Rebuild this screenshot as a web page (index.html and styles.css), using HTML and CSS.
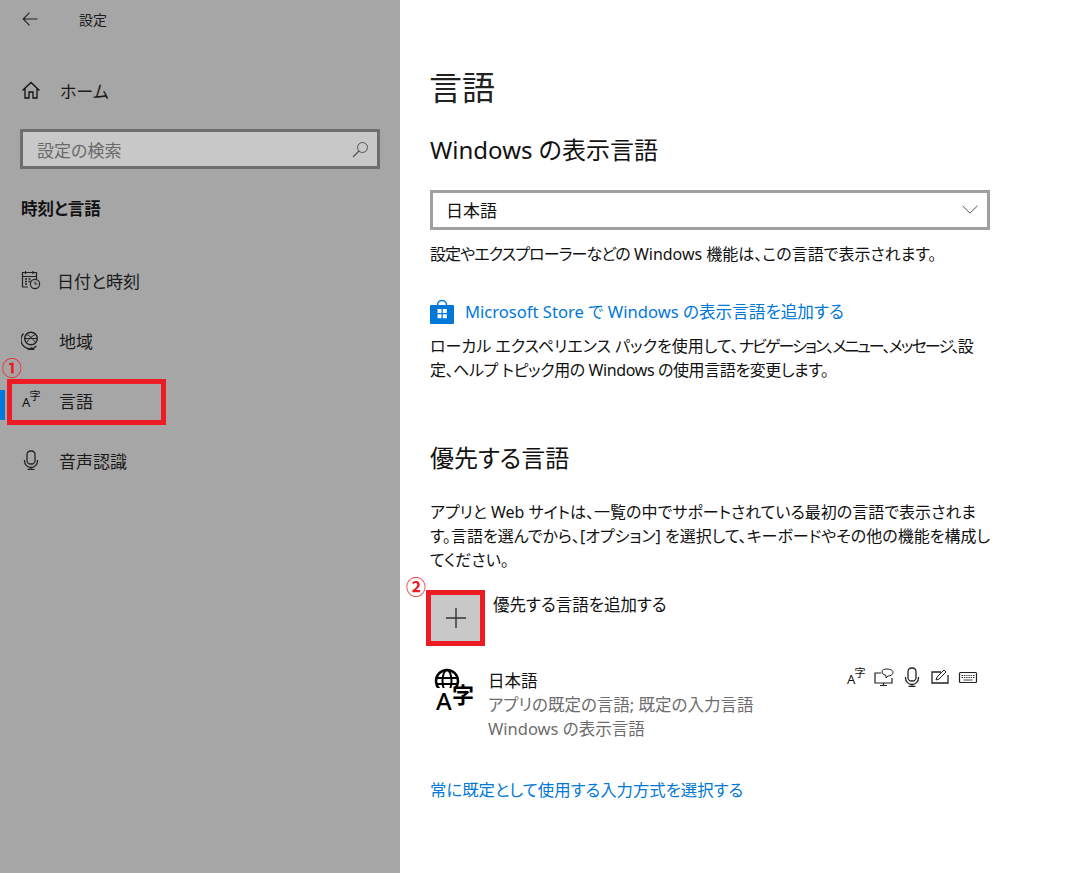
FILE: index.html
```html
<!DOCTYPE html>
<html lang="ja">
<head>
<meta charset="utf-8">
<title>設定</title>
<link rel="stylesheet" href="styles.css">
</head>
<body>
<div class="app">
  <aside class="side">
    <div class="titlebar">
      <svg class="back" width="16" height="14" viewBox="0 0 16 14"><path d="M7.5 .7 1.2 7l6.3 6.3M1.2 7H15.5" fill="none" stroke="#222" stroke-width="1.1"/></svg>
      <span class="apptitle">設定</span>
    </div>
    <div class="nav home">
      <svg class="ico" width="20" height="20" viewBox="0 0 20 20"><path d="M1.5 10.5 10 2.5l8.5 8M4 8.5V18h4v-6h4v6h4V8.5" fill="none" stroke="#111" stroke-width="1.3"/></svg>
      <span>ホーム</span>
    </div>
    <div class="search">
      <span class="ph">設定の検索</span>
      <svg width="17" height="17" viewBox="0 0 17 17"><circle cx="10.5" cy="6.5" r="5" fill="none" stroke="#555" stroke-width="1"/><path d="M7 10 1 16" stroke="#555" stroke-width="1.2"/></svg>
    </div>
    <div class="group">時刻と言語</div>
    <div class="nav first">
      <svg class="ico" width="20" height="20" viewBox="0 0 20 20"><path d="M7 17H1.5V2.5h14V9M1.5 6.5h14M4.5 1v3M12 1v3" fill="none" stroke="#222" stroke-width="1.2"/><path d="M4 9h2M7.5 9h2M4 11.5h2M7.5 11.5h2M4 14h2" stroke="#222" stroke-width="1.4"/><circle cx="14" cy="14" r="4.6" fill="none" stroke="#222" stroke-width="1.2"/><path d="M14 11.5V14h2.4" fill="none" stroke="#222"/></svg>
      <span>日付と時刻</span>
    </div>
    <div class="nav">
      <svg class="ico" width="20" height="20" viewBox="0 0 20 20"><circle cx="10" cy="8.5" r="6.3" fill="none" stroke="#222" stroke-width="1.4"/><path d="M5.5 4.500c3 1 6 4 9 8M14.500 4.500c-3 1-6 4-9 8M4 8.500h12" fill="none" stroke="#222"/><path d="M2.500 3.500a9 9 0 0 0 13 12.500M10 17v2M6.500 19.300h7" fill="none" stroke="#222" stroke-width="1.200"/></svg>
      <span>地域</span>
    </div>
    <div class="nav active">
      <svg class="ico glyphs" width="20" height="20" viewBox="0 0 20 20"><text class="ico-a" x="1" y="17">A</text><text class="ico-z" x="8.500" y="10">字</text></svg>
      <span>言語</span>
    </div>
    <div class="nav">
      <svg class="ico" width="20" height="20" viewBox="0 0 20 20"><rect x="6" y="1" width="8" height="13" rx="3.500" fill="none" stroke="#222" stroke-width="1.300"/><path d="M3.500 10v1a6 6 0 0 0 13 0v-1M10 17v2.500M6.500 19.500h7" fill="none" stroke="#222" stroke-width="1.300"/></svg>
      <span>音声認識</span>
    </div>
  </aside>
  <main class="main">
    <h1 class="h1">言語</h1>
    <h2 class="h2">Windows の表示言語</h2>
    <div class="select"><span>日本語</span>
      <svg width="16" height="9" viewBox="0 0 16 9"><path d="M.5 .8 8 8.200 15.500 .8" fill="none" stroke="#555"/></svg>
    </div>
    <p class="p one"><span class="snug">設定やエクスプローラーなどの</span> Windows 機能は、この言語で表示されます。</p>
    <div class="store">
      <svg width="24" height="24" viewBox="0 0 24 24"><path d="M7.500 6V5a4.500 4.500 0 0 1 9 0v1" fill="none" stroke="#0078d7" stroke-width="1.500"/><rect x="0" y="5" width="24" height="19" rx="1" fill="#0078d7"/><path d="M7.500 9h4v4h-4zM12.800 9h4v4h-4zM7.500 14.300h4v4h-4zM12.800 14.300h4v4h-4z" fill="#fff"/></svg>
      <a class="link">Microsoft Store で Windows の表示言語を追加する</a>
    </div>
    <p class="p two">ローカル エクスペリエンス パックを使用して、<span class="tight">ナビゲーション、メニュー、メッセージ、</span>設<br><span class="slight">定、ヘルプ トピック用の Windows の使用言語を変更します。</span></p>
    <h2 class="h2 second">優先する言語</h2>
    <p class="p three">アプリと Web サイトは、一覧の中でサポートされている最初の言語で表示されます。言語を選んでから、[オプション] を選択して、キーボードやその他の機能を構成してください。</p>
    <div class="add">
      <div class="plus"><svg width="22" height="22" viewBox="0 0 22 22"><path d="M11 1v20M1 11h20" stroke="#333" stroke-width="1.400"/></svg></div>
      <span class="addtext">優先する言語を追加する</span>
    </div>
    <div class="lang">
      <svg class="langico" width="42" height="44" viewBox="0 0 42 44"><circle cx="13" cy="11" r="11" fill="none" stroke="#000" stroke-width="2.500"/><ellipse cx="13" cy="11" rx="4.500" ry="11" fill="none" stroke="#000" stroke-width="2"/><path d="M2 8h22M2 14h22" stroke="#000" stroke-width="2"/><rect x="0" y="18" width="42" height="26" fill="#fff"/><text class="big-a" x="2" y="40">A</text><text class="big-z" x="18" y="33">字</text></svg>
      <div class="langinfo">
        <div class="langname">日本語</div>
        <div class="sub">アプリの既定の言語; 既定の入力言語</div>
        <div class="sub">Windows の表示言語</div>
      </div>
      <div class="feats">
        <svg class="glyphs" width="20" height="20" viewBox="0 0 20 20"><text class="ico-a" x="1" y="17">A</text><text class="ico-z" x="8.500" y="10">字</text></svg>
        <svg width="20" height="20" viewBox="0 0 20 20"><path d="M7 6H1v10h17v-5M6 18.500h7M9.500 16v2.500" fill="none" stroke="#222" stroke-width="1.200"/><path d="M13 2c3 0 6 1 6 3.500S16 9 14 9l-2 2v-2.500C9 7.500 8 6.500 8 5c0-2 2-3 5-3z" fill="#fff" stroke="#222"/></svg>
        <svg width="20" height="20" viewBox="0 0 20 20"><rect x="6" y="1" width="8" height="13" rx="3.500" fill="none" stroke="#222" stroke-width="1.300"/><path d="M3.500 10v1a6 6 0 0 0 13 0v-1M10 17v2.500M6.500 19.500h7" fill="none" stroke="#222" stroke-width="1.300"/></svg>
        <svg width="20" height="20" viewBox="0 0 20 20"><path d="M11 5H2v11h16V8" fill="none" stroke="#222" stroke-width="1.300"/><path d="M6 13l1-3 7-7 2 2-7 7z" fill="#fff" stroke="#222"/></svg>
        <svg width="20" height="20" viewBox="0 0 20 20"><rect x="1.500" y="5.500" width="17" height="10" rx="1" fill="none" stroke="#222" stroke-width="1.200"/><path d="M3.500 8.500h13M3.500 10.500h13" stroke="#444" stroke-dasharray="1.500 .8"/><path d="M5.500 13h9" stroke="#444"/></svg>
      </div>
    </div>
    <a class="link choose">常に既定として使用する入力方式を選択する</a>
  </main>
</div>
<div class="mark box1"></div>
<div class="mark box2"></div>
<span class="num n1">①</span>
<span class="num n2">②</span>
</body>
</html>
```
FILE: styles.css
```css
* { box-sizing: border-box; }
html, body { margin: 0; padding: 0; height: 100%; background: #fff; overflow: hidden; }
body { font-family: "Noto Sans", "Noto Sans CJK JP", sans-serif; font-size: 16.5px; color: #111; position: relative; font-feature-settings: "palt"; }
.app { display: flex; height: 873px; }

.side { width: 400px; background: #a6a6a6; padding-top: 7px; flex: none; }
.titlebar { display: flex; align-items: center; height: 24px; padding-left: 22px; }
.apptitle { font-family: "Noto Sans CJK JP", sans-serif; font-size: 14px; margin-left: 41px; color: #1a1a1a; }
.nav { display: flex; align-items: center; height: 24px; padding-left: 21px; font-family: "Noto Sans CJK JP", sans-serif; font-size: 17px; color: #1a1a1a; margin-top: 36px; position: relative; }
.nav .ico { flex: none; margin-right: 18px; }
.nav.home { margin-top: 47px; }
.nav.home .ico { margin-right: 19px; }
.nav.first { margin-top: 48px; }
.nav.first .ico { margin-right: 16px; }
.nav.active::before { content: ""; position: absolute; left: 0; top: 2px; width: 5px; height: 30px; background: #0078d7; }
.search { display: flex; align-items: center; justify-content: space-between; width: 360px; height: 40px; margin: 27px 0 0 20px; background: #c8c8c8; border: 3px solid #6e6e6e; padding: 0 8px 0 14px; }
.ph { font-family: "Noto Sans CJK JP", sans-serif; font-size: 17px; color: #6a6a6a; }
.group { font-family: "Noto Sans CJK JP", sans-serif; font-weight: 700; font-size: 16.5px; line-height: 24px; margin: 27px 0 0 21px; color: #111; }

.glyphs { overflow: visible; }
.ico-a { font-family: "Noto Sans", sans-serif; font-size: 13px; fill: #111; }
.ico-z { font-family: "Noto Sans CJK JP", sans-serif; font-size: 11px; fill: #111; }

.main { flex: 1; padding: 62px 0 0 30px; min-width: 0; }
.h1 { font-family: "Noto Sans CJK JP", sans-serif; font-weight: 400; font-size: 33px; line-height: 48px; margin: 0 0 0 -1px; color: #222; }
.h2 { font-weight: 400; font-size: 24px; line-height: 34px; margin: 23px 0 0; color: #111; }
.h2.second { margin-top: 59px; }
.select { display: flex; align-items: center; justify-content: space-between; width: 560px; height: 40px; margin-top: 23px; border: 3px solid #a0a0a0; padding: 0 9px 1px 13px; font-family: "Noto Sans CJK JP", sans-serif; font-size: 17px; }
.p { margin: 0; font-size: 16px; line-height: 24px; width: 560px; color: #111; }
.tight { letter-spacing: -1.9px; }
.snug { letter-spacing: -.9px; }
.slight { letter-spacing: -.4px; }
.p.one { margin-top: 12px; }
.store { display: flex; align-items: center; margin-top: 33px; height: 26px; }
.store .link { margin-left: 11px; }
.link { color: #0078d7; font-size: 16.6px; line-height: 24px; }
.p.two { margin-top: 9px; }
.p.three { margin-top: 25px; }
.add { display: flex; align-items: flex-start; margin-top: 21px; }
.plus { display: flex; align-items: center; justify-content: center; width: 50px; height: 50px; margin-left: 1px; background: #c8c8c8; }
.addtext { line-height: 24px; margin: 0 0 0 12px; }
.lang { display: flex; align-items: flex-start; width: 550px; margin-top: 26px; position: relative; }
.langico { flex: none; margin: 1px 12px 0 4px; overflow: visible; }
.big-a { font-family: "Noto Sans", sans-serif; font-size: 24px; font-weight: 500; fill: #000; }
.big-z { font-family: "Noto Sans CJK JP", sans-serif; font-size: 22px; fill: #000; font-weight: 700; }
.langinfo { line-height: 24px; font-size: 16.5px; }
.langname { color: #111; }
.sub { color: #6d6d6d; }
.feats { position: absolute; right: 2px; top: -2px; display: flex; gap: 8px; }
.choose { display: block; margin-top: 37px; font-size: 16.4px; }

.mark { position: absolute; border: 5px solid #ed1c24; }
.box1 { left: 7px; top: 379px; width: 159px; height: 46px; }
.box2 { left: 426px; top: 590px; width: 59px; height: 56px; }
.num { position: absolute; font-family: "Noto Sans CJK JP", sans-serif; color: #ed1c24; font-size: 20px; font-weight: 700; line-height: 20px; }
.n1 { left: 2px; top: 358px; }
.n2 { left: 406px; top: 577px; }
```
